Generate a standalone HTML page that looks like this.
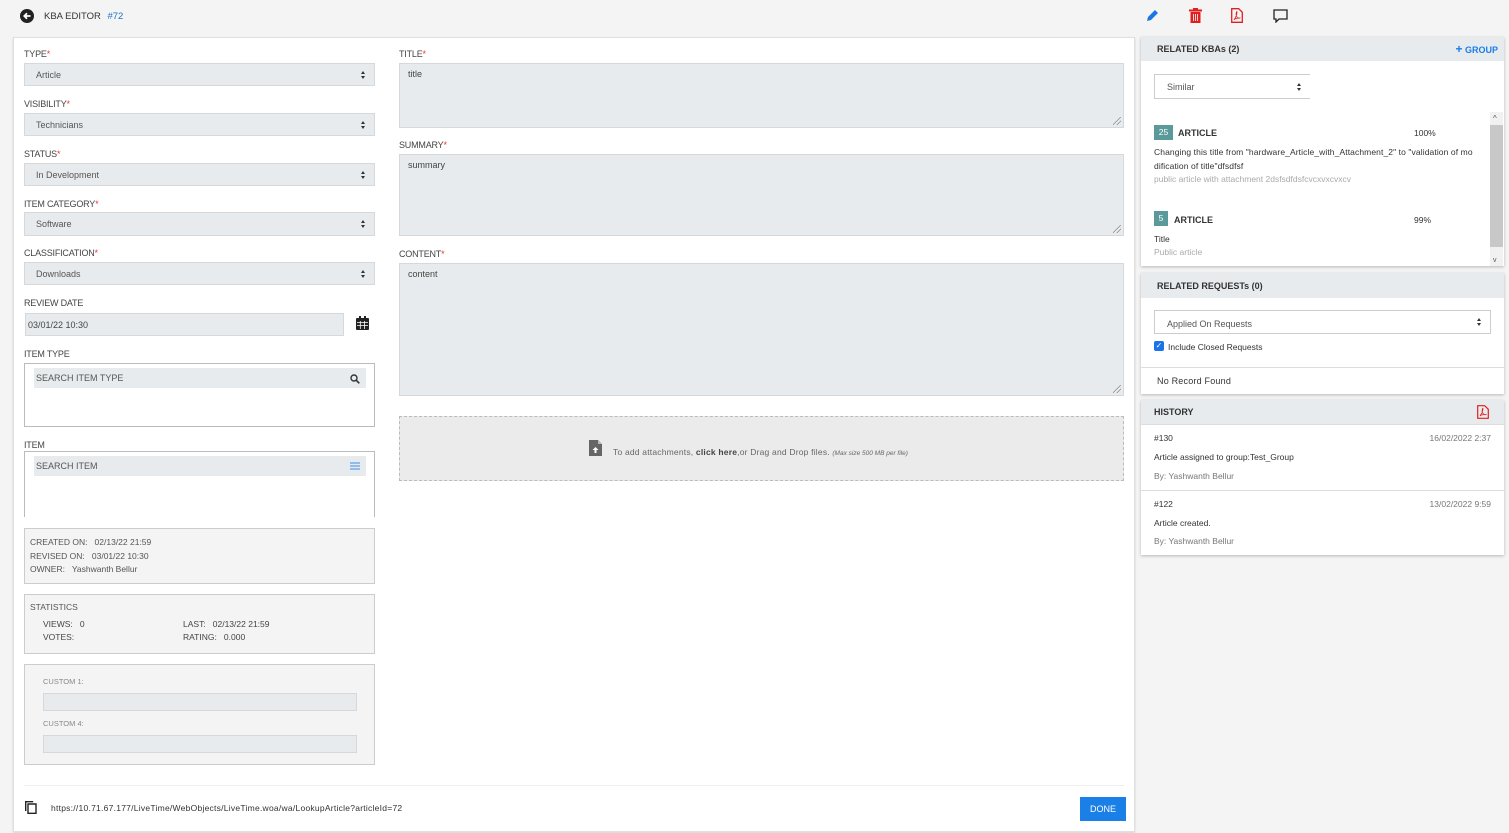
<!DOCTYPE html>
<html><head><meta charset="utf-8"><style>
*{box-sizing:border-box;margin:0;padding:0}
body{width:1509px;height:833px;background:#f4f4f4;font-family:"Liberation Sans",sans-serif;font-size:9px;color:#333;position:relative;overflow:hidden}
.a{position:absolute}
.lbl{position:absolute;font-size:9px;color:#444;letter-spacing:-.2px}
.lbl i{color:#e33;font-style:normal}
.sel{position:absolute;background:#e8ebee;border:1px solid #d6d9dc;font-size:9px;color:#555;padding-left:11px;display:flex;align-items:center}
.arr{position:absolute;right:8px;top:50%;margin-top:-4px;width:5px;height:8px}
.arr:before{content:"";position:absolute;left:0;top:0;border:2.5px solid transparent;border-bottom:3px solid #333;border-top:0}
.arr:after{content:"";position:absolute;left:0;bottom:0;border:2.5px solid transparent;border-top:3px solid #333;border-bottom:0}
.ta{position:absolute;background:#e8ebee;border:1px solid #d6d9dc;font-size:9px;color:#444;padding:5px 8px}
.ta:after{content:"";position:absolute;right:2px;bottom:2px;width:8px;height:8px;background:linear-gradient(135deg,transparent 45%,#888 46%,#888 52%,transparent 53%,transparent 70%,#888 71%,#888 77%,transparent 78%)}
.box{position:absolute;border:1px solid #ccc;background:#f4f4f4}
.card{position:absolute;background:#fff;box-shadow:0 1px 3px rgba(0,0,0,.25)}
.hd{background:#e8ebee;font-weight:bold;font-size:9px;color:#333;padding-left:16px;display:flex;align-items:center}
</style></head><body>
<svg class="a" style="left:20px;top:9px" width="14" height="14" viewBox="0 0 14 14"><circle cx="7" cy="7" r="7" fill="#222"/><path d="M10.5 7H4.5M7 4.3L4.3 7 7 9.7" stroke="#fff" stroke-width="1.8" fill="none"/></svg>
<div class="a" style="left:44px;top:11px;font-size:9.5px;color:#333">KBA EDITOR <span style="color:#1a73c8;margin-left:4px">#72</span></div>
<svg class="a" style="left:1145px;top:8px" width="15" height="15" viewBox="0 0 15 15"><path d="M2 13l1-4 7-7 3 3-7 7z" fill="#1a73e8"/></svg>
<svg class="a" style="left:1189px;top:8px" width="13" height="15" viewBox="0 0 13 15"><rect x="0" y="1.5" width="13" height="2" fill="#e02020"/><rect x="4" y="0" width="5" height="2" fill="#e02020"/><rect x="1.5" y="4" width="10" height="11" fill="#e02020"/><path d="M4.5 6v7M6.5 6v7M8.5 6v7" stroke="#fff" stroke-width=".8"/></svg>
<svg class="a" style="left:1231px;top:8px" width="12" height="15" viewBox="0 0 12 15"><path d="M.7.7h7l3.6 3.6v10H.7z" fill="none" stroke="#e02020" stroke-width="1.3"/><path d="M3 12c2-3 3-6 3-8s-2 3 0 5 3 1 3 1-5 0-6 2" fill="none" stroke="#e02020" stroke-width=".8"/></svg>
<svg class="a" style="left:1273px;top:9px" width="15" height="14" viewBox="0 0 15 14"><path d="M1 1h13v9H6l-3 3v-3H1z" fill="none" stroke="#222" stroke-width="1.3"/></svg>

<div class="a" style="left:13px;top:37px;width:1122px;height:795px;background:#fff;border:1px solid #e0e0e0;box-shadow:0 1px 2px rgba(0,0,0,.15)"></div>

<div class="lbl" style="left:24px;top:49px">TYPE<i>*</i></div>
<div class="sel" style="left:24px;top:63px;width:351px;height:23px">Article<span class="arr"></span></div>
<div class="lbl" style="left:24px;top:99px">VISIBILITY<i>*</i></div>
<div class="sel" style="left:24px;top:113px;width:351px;height:23px">Technicians<span class="arr"></span></div>
<div class="lbl" style="left:24px;top:149px">STATUS<i>*</i></div>
<div class="sel" style="left:24px;top:163px;width:351px;height:23px">In Development<span class="arr"></span></div>
<div class="lbl" style="left:24px;top:199px">ITEM CATEGORY<i>*</i></div>
<div class="sel" style="left:24px;top:212px;width:351px;height:24px">Software<span class="arr"></span></div>
<div class="lbl" style="left:24px;top:248px">CLASSIFICATION<i>*</i></div>
<div class="sel" style="left:24px;top:262px;width:351px;height:23px">Downloads<span class="arr"></span></div>
<div class="lbl" style="left:24px;top:298px">REVIEW DATE</div>
<div class="sel" style="left:25px;top:313px;width:319px;height:23px;padding-left:2px;color:#444">03/01/22 10:30</div>
<svg class="a" style="left:356px;top:316px" width="13" height="14" viewBox="0 0 13 14"><rect x="0" y="2" width="13" height="12" rx="1" fill="#222"/><rect x="3" y="0" width="2" height="3" fill="#222"/><rect x="8" y="0" width="2" height="3" fill="#222"/><path d="M1 6.5h11M1 9.5h11M4.3 5v8M8.6 5v8" stroke="#fff" stroke-width=".8"/></svg>
<div class="lbl" style="left:24px;top:349px">ITEM TYPE</div>
<div class="a" style="left:24px;top:363px;width:351px;height:64px;border:1px solid #bbb"></div>
<div class="sel" style="left:34px;top:368px;width:332px;height:20px;border:none;padding-left:2px">SEARCH ITEM TYPE</div>
<svg class="a" style="left:350px;top:374px" width="10" height="10" viewBox="0 0 10 10"><circle cx="4" cy="4" r="3" fill="none" stroke="#333" stroke-width="1.4"/><path d="M6.3 6.3L9.3 9.3" stroke="#333" stroke-width="1.6"/></svg>
<div class="lbl" style="left:24px;top:440px">ITEM</div>
<div class="a" style="left:24px;top:451px;width:351px;height:66px;border:1px solid #bbb;border-bottom:none"></div>
<div class="sel" style="left:34px;top:456px;width:332px;height:20px;border:none;padding-left:2px">SEARCH ITEM</div>
<svg class="a" style="left:350px;top:462px" width="10" height="8" viewBox="0 0 10 8"><path d="M0 1h10M0 4h10M0 7h10" stroke="#3b8ee8" stroke-width="1"/></svg>

<div class="box" style="left:24px;top:528px;width:351px;height:56px"></div>
<div class="a" style="left:30px;top:536px;line-height:13.5px;color:#555;font-size:8.5px">CREATED ON:&nbsp;&nbsp; 02/13/22 21:59<br>REVISED ON:&nbsp;&nbsp; 03/01/22 10:30<br>OWNER:&nbsp;&nbsp; Yashwanth Bellur</div>
<div class="box" style="left:24px;top:594px;width:351px;height:60px"></div>
<div class="a" style="left:30px;top:602px;color:#555;font-size:8.5px">STATISTICS</div>
<div class="a" style="left:43px;top:618px;line-height:13px;color:#444;font-size:8.5px">VIEWS:&nbsp;&nbsp; 0<br>VOTES:</div>
<div class="a" style="left:183px;top:618px;line-height:13px;color:#444;font-size:8.5px">LAST:&nbsp;&nbsp; 02/13/22 21:59<br>RATING:&nbsp;&nbsp; 0.000</div>
<div class="box" style="left:24px;top:664px;width:351px;height:101px"></div>
<div class="a" style="left:43px;top:677px;color:#888;font-size:7.5px">CUSTOM 1:</div>
<div class="a" style="left:43px;top:693px;width:314px;height:18px;background:#e8ebee;border:1px solid #d6d9dc"></div>
<div class="a" style="left:43px;top:719px;color:#888;font-size:7.5px">CUSTOM 4:</div>
<div class="a" style="left:43px;top:735px;width:314px;height:18px;background:#e8ebee;border:1px solid #d6d9dc"></div>

<div class="lbl" style="left:399px;top:49px">TITLE<i>*</i></div>
<div class="ta" style="left:399px;top:63px;width:725px;height:65px">title</div>
<div class="lbl" style="left:399px;top:140px">SUMMARY<i>*</i></div>
<div class="ta" style="left:399px;top:154px;width:725px;height:82px">summary</div>
<div class="lbl" style="left:399px;top:249px">CONTENT<i>*</i></div>
<div class="ta" style="left:399px;top:263px;width:725px;height:133px">content</div>
<div class="a" style="left:399px;top:416px;width:725px;height:65px;background:#ebebeb;border:1px dashed #bbb"></div>
<svg class="a" style="left:589px;top:440px" width="13" height="16" viewBox="0 0 13 16"><path d="M0 0h9l4 4v12H0z" fill="#666"/><path d="M9 0v4h4" fill="#bbb"/><path d="M6.5 7l-3 3h2v3h2v-3h2z" fill="#fff"/></svg>
<div class="a" style="left:613px;top:447px;color:#666;font-size:8.5px;letter-spacing:.2px">To add attachments, <b style="color:#444">click here</b>,or Drag and Drop files. <i style="font-size:6.5px;letter-spacing:0">(Max size 500 MB per file)</i></div>

<div class="a" style="left:24px;top:785px;width:1100px;height:1px;background:#eee"></div>
<svg class="a" style="left:25px;top:801px" width="12" height="13" viewBox="0 0 12 13"><path d="M3 3h8v9.3H3zM.7 10V.7h7.5" fill="none" stroke="#222" stroke-width="1.4"/></svg>
<div class="a" style="left:51px;top:803px;color:#333;font-size:8.5px;letter-spacing:.25px">https://10.71.67.177/LiveTime/WebObjects/LiveTime.woa/wa/LookupArticle?articleId=72</div>
<div class="a" style="left:1080px;top:797px;width:46px;height:24px;background:#1a7fe6;color:#fff;font-size:9px;display:flex;align-items:center;justify-content:center">DONE</div>

<div class="card" style="left:1141px;top:37px;width:363px;height:229px">
 <div class="hd" style="height:24px">RELATED KBAs (2)<span style="position:absolute;right:6px;color:#1a7fe6;font-size:9px"><b style="font-size:12px">+</b> GROUP</span></div>
 <div class="a" style="left:13px;top:37px;width:156px;height:25px;border:1px solid #ccc;border-right:none;font-size:9px;color:#555;padding:12px 0 0 12px;line-height:0">Similar<span class="arr"></span></div>
 <div class="a" style="left:349px;top:75px;width:13px;height:154px;background:#f1f1f1"><div style="position:absolute;top:13px;left:0;width:13px;height:122px;background:#c8c8c8"></div><div style="position:absolute;top:2px;left:3px;font-size:8px;color:#555">^</div><div style="position:absolute;bottom:2px;left:3px;font-size:7px;color:#555">v</div></div>
 <div class="a" style="left:13px;top:88px;width:19px;height:15px;background:#5a9a9a;color:#fff;font-size:8.5px;text-align:center;line-height:15px">25</div>
 <div class="a" style="left:37px;top:91px;font-weight:bold;font-size:9px">ARTICLE</div>
 <div class="a" style="left:273px;top:91px;font-size:8.5px">100%</div>
 <div class="a" style="left:13px;top:109px;width:322px;font-size:8.5px;line-height:13.5px;color:#333;word-break:break-all;letter-spacing:.1px">Changing this title from "hardware_Article_with_Attachment_2" to "validation of modification of title"dfsdfsf</div>
 <div class="a" style="left:13px;top:137px;font-size:8.5px;color:#aaa">public article with attachment 2dsfsdfdsfcvcxvxcvxcv</div>
 <div class="a" style="left:13px;top:174px;width:14px;height:15px;background:#5a9a9a;color:#fff;font-size:8.5px;text-align:center;line-height:15px">5</div>
 <div class="a" style="left:33px;top:178px;font-weight:bold;font-size:9px">ARTICLE</div>
 <div class="a" style="left:273px;top:178px;font-size:8.5px">99%</div>
 <div class="a" style="left:13px;top:197px;font-size:8.5px">Title</div>
 <div class="a" style="left:13px;top:210px;font-size:8.5px;color:#aaa">Public article</div>
</div>

<div class="card" style="left:1141px;top:273px;width:363px;height:121px">
 <div class="hd" style="height:25px">RELATED REQUESTs (0)</div>
 <div class="a" style="left:13px;top:37px;width:337px;height:24px;border:1px solid #ccc;font-size:9px;color:#555;padding:13px 0 0 12px;line-height:0">Applied On Requests<span class="arr"></span></div>
 <div class="a" style="left:13px;top:68px;width:10px;height:10px;background:#1a73e8;border-radius:2px;color:#fff;font-size:8px;line-height:10px;text-align:center">✓</div>
 <div class="a" style="left:27px;top:69px;font-size:8.5px">Include Closed Requests</div>
 <div class="a" style="left:0;top:94px;width:363px;border-top:1px solid #ddd"></div>
 <div class="a" style="left:16px;top:103px;font-size:9px;letter-spacing:.2px">No Record Found</div>
</div>

<div class="card" style="left:1141px;top:400px;width:363px;height:155px">
 <div class="hd" style="height:25px;padding-left:13px;border-bottom:1px solid #ddd">HISTORY</div>
 <svg class="a" style="left:336px;top:5px" width="12" height="14" viewBox="0 0 12 14"><path d="M.7.7h7l3.6 3.6v9H.7z" fill="none" stroke="#e02020" stroke-width="1.2"/><path d="M3 11c2-3 3-6 3-7.5s-2 3 0 5 3 1 3 1-5 0-6 1.5" fill="none" stroke="#e02020" stroke-width=".8"/></svg>
 <div class="a" style="left:13px;top:33px;font-size:8.5px">#130</div>
 <div class="a" style="right:13px;top:33px;font-size:8.5px;color:#777">16/02/2022 2:37</div>
 <div class="a" style="left:13px;top:52px;font-size:8.5px">Article assigned to group:Test_Group</div>
 <div class="a" style="left:13px;top:71px;font-size:8.5px;color:#777">By: Yashwanth Bellur</div>
 <div class="a" style="left:0;top:90px;width:363px;border-top:1px solid #ddd"></div>
 <div class="a" style="left:13px;top:99px;font-size:8.5px">#122</div>
 <div class="a" style="right:13px;top:99px;font-size:8.5px;color:#777">13/02/2022 9:59</div>
 <div class="a" style="left:13px;top:118px;font-size:8.5px">Article created.</div>
 <div class="a" style="left:13px;top:136px;font-size:8.5px;color:#777">By: Yashwanth Bellur</div>
</div>
</body></html>
